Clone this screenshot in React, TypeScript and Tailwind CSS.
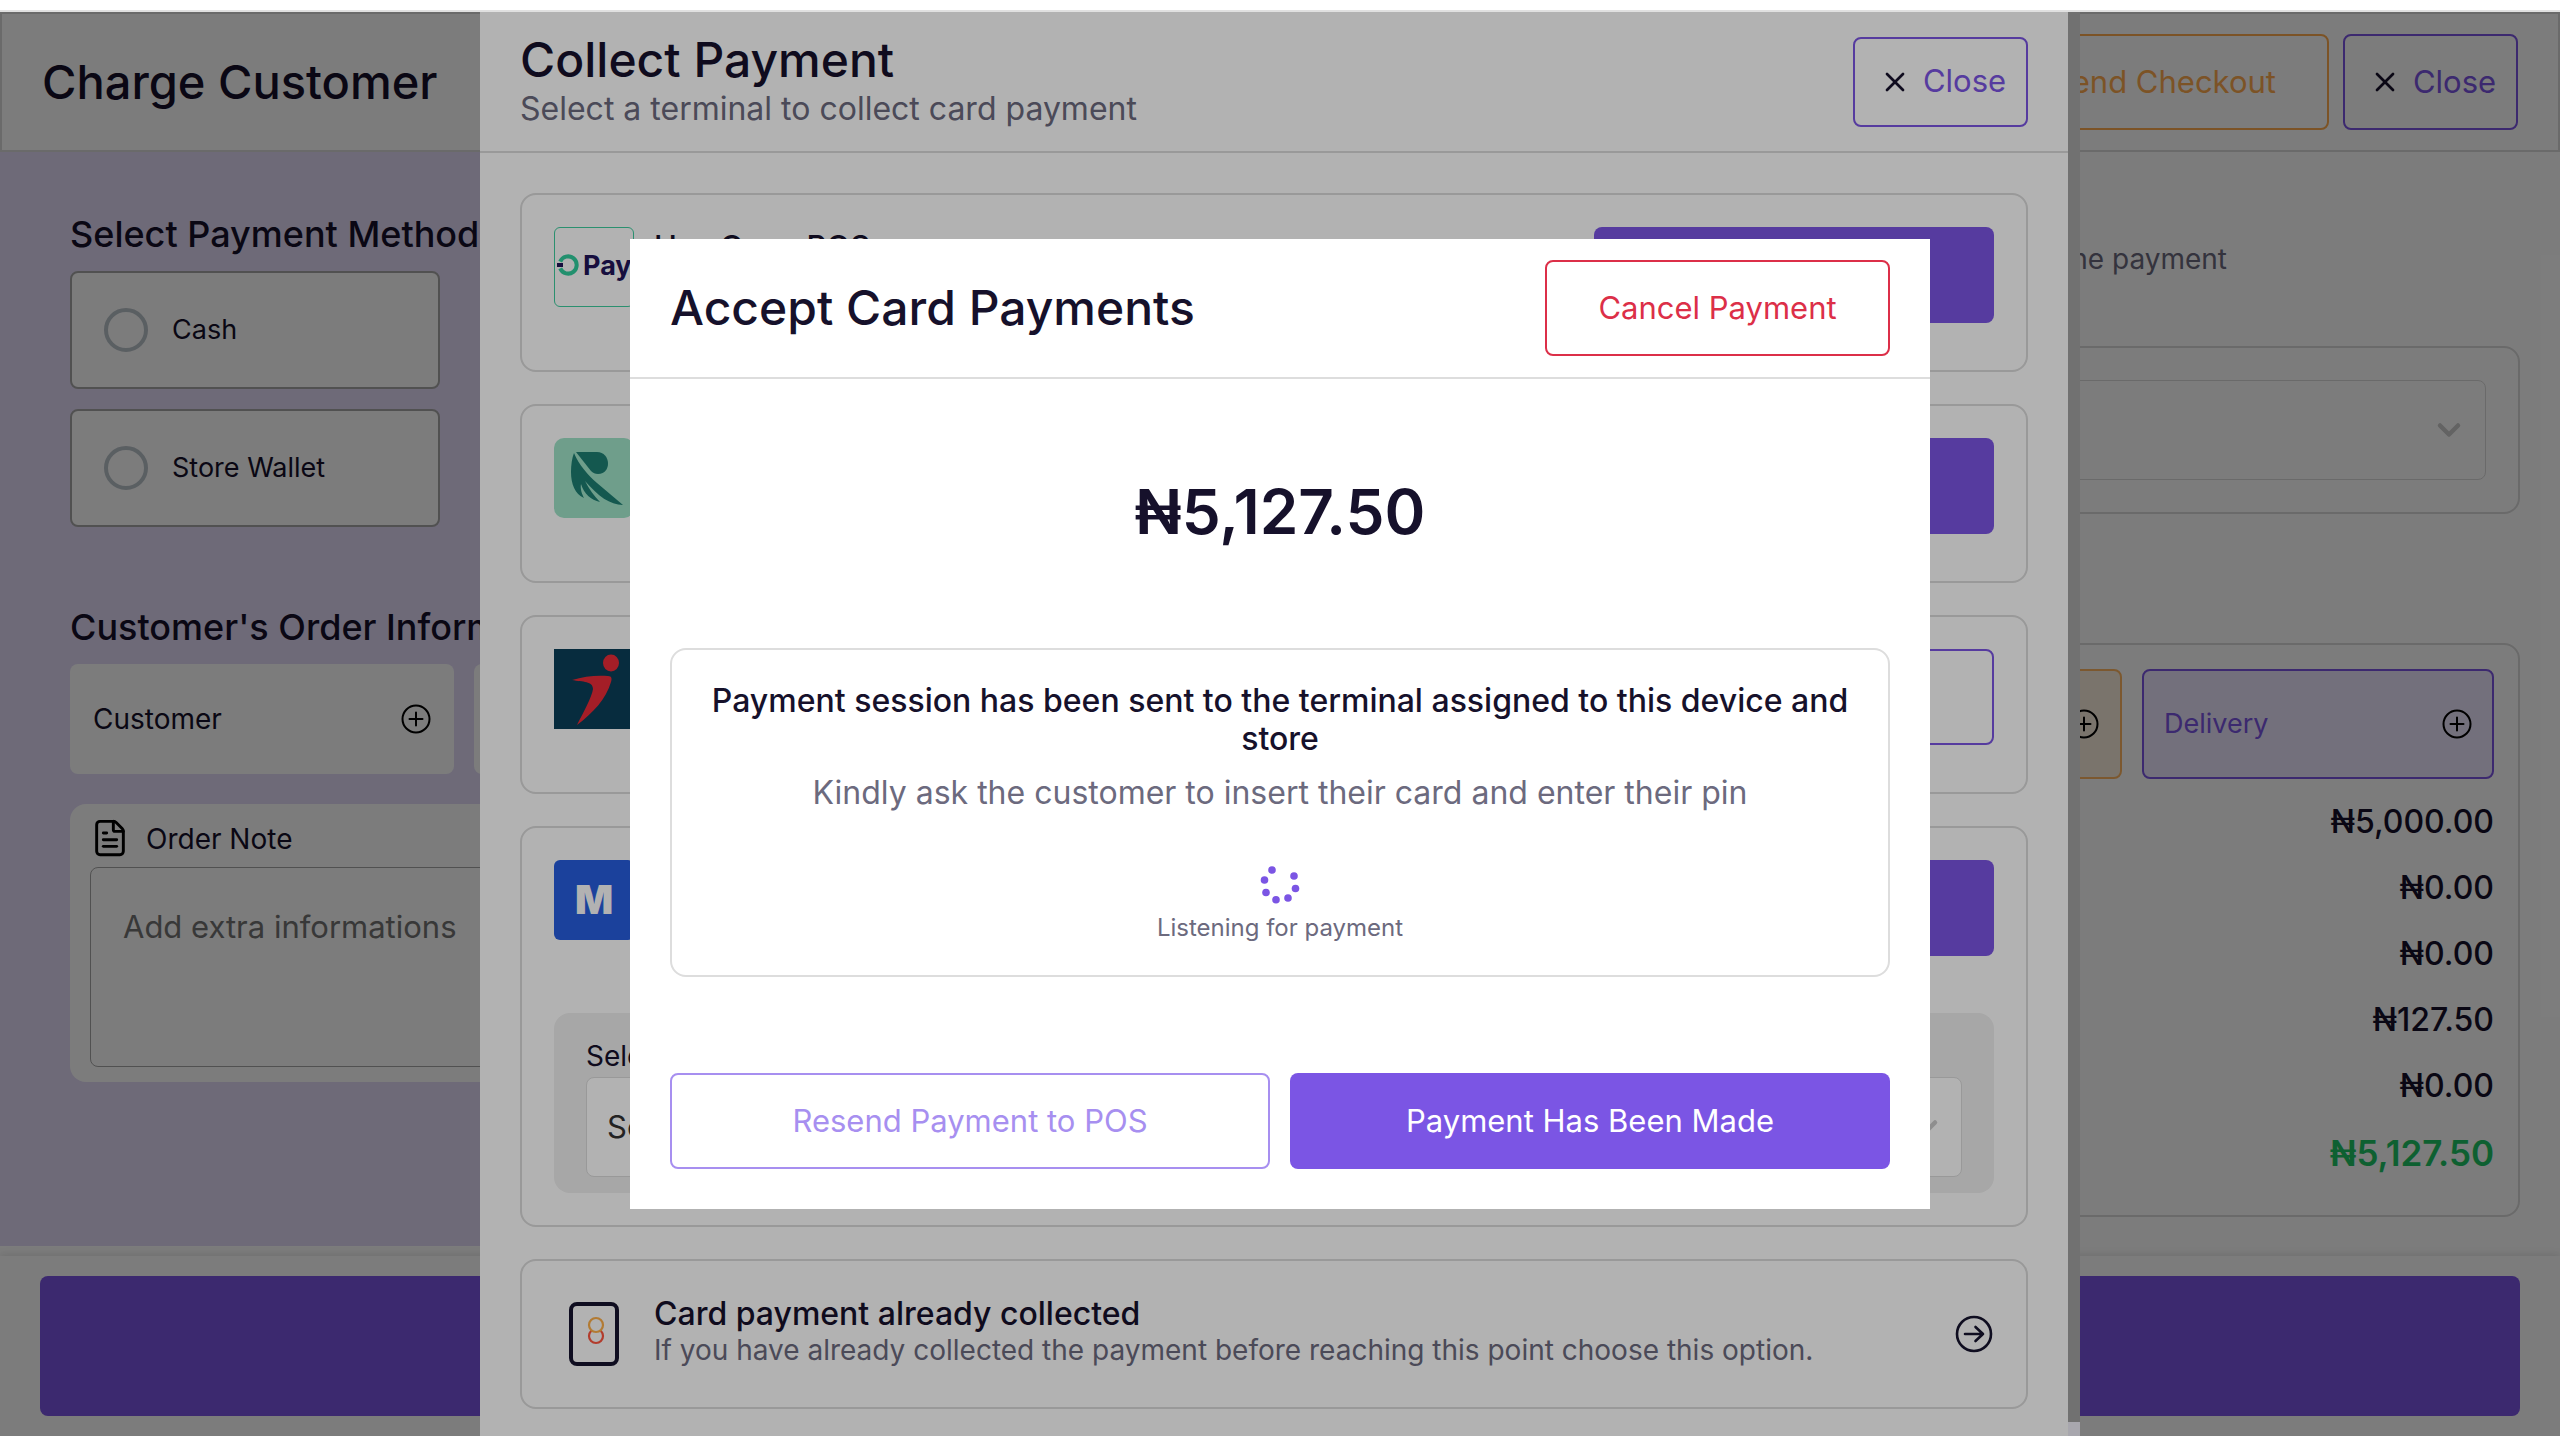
import type { ReactNode } from "react";
import { ChevronDown, FileText, X } from "lucide-react";

const totals = [
  { label: "Subtotal", value: "₦5,000.00" },
  { label: "Discount", value: "₦0.00" },
  { label: "Delivery Fee", value: "₦0.00" },
  { label: "Tax", value: "₦127.50" },
  { label: "Service Charge", value: "₦0.00" }
];

const PlusCircle = () => (
  <svg viewBox="0 0 30 30" className="size-[30px] shrink-0" fill="none" stroke="#000" strokeWidth="2" strokeLinecap="round">
    <circle cx="15" cy="15" r="13.5" />
    <path d="M15 8.5v13M8.5 15h13" />
  </svg>
);

const OpayLogo = () => (
  <div className="flex size-20 shrink-0 items-center gap-1 overflow-hidden rounded-[6px] border border-[#3ecea0] pb-1 pl-[2px]">
    <svg viewBox="0 0 22 22" className="size-[22px] shrink-0" fill="none">
      <path d="M3.2 7.6A8.6 8.6 0 1 1 3.2 14.4" stroke="#31ce9e" strokeWidth="4" />
      <path d="M0 9h6v4H0z" fill="#21155a" />
    </svg>
    <span className="text-[27px] leading-none font-bold text-[#21155a]">Pay</span>
  </div>
);

const RavenLogo = () => (
  <svg viewBox="0 0 80 80" className="size-20 shrink-0">
    <rect width="80" height="80" rx="10" fill="#9fe3c8" />
    <path d="M22 14h21c14 0 15 22 1 22-3 0-5-1-7-3Z" fill="#1d7e72" />
    <path
      d="M20 15C25 27 34 37 43 45L69 67C56 67 44 58 31 43C35 51 40 58 46 64C37 62 30 56 27 46C26 51 28 56 30 60C21 56 17 46 17 34C17 27 18 20 20 15Z"
      fill="#1d7e72"
    />
  </svg>
);

const RunnerLogo = () => (
  <svg viewBox="0 0 80 80" className="size-20 shrink-0">
    <rect width="80" height="80" fill="#0b3f59" />
    <ellipse cx="57" cy="14" rx="8" ry="8.5" fill="#eb2c38" />
    <path d="M18 31c12-4 26-5 36-4 4 0 4 3 3 6-5 17-18 31-34 43 6-12 15-28 16-36 0-8-10-7-21-9Z" fill="#eb2c38" />
  </svg>
);

const MoniepointLogo = () => (
  <div className="flex size-20 shrink-0 items-center justify-center rounded-[6px] bg-[#275ee0] text-[40px] leading-none font-black text-white">
    M
  </div>
);

const PosCard = ({ logo, title, outline, children }: { logo: ReactNode; title: string; outline?: boolean; children?: ReactNode }) => (
  <div className="flex min-h-[179px] flex-col gap-[57px] rounded-2xl border-2 border-[#dbdbdb] p-8">
    <div className="flex items-start justify-between">
      <div className="flex gap-5">
        {logo}
        <h3 className="text-[31px] leading-10 font-medium">{title}</h3>
      </div>
      <button
        aria-label={title}
        className={
          outline
            ? "h-24 w-[400px] rounded-lg border-2 border-[#7b55e4]"
            : "h-24 w-[400px] rounded-lg bg-[#7b55e4]"
        }
      />
    </div>
    {children}
  </div>
);

const ChargeCustomer = () => (
  <div className="flex h-full flex-col bg-white pt-3">
    <header className="flex h-[140px] shrink-0 items-center justify-between border-2 border-[#dbdbdb] px-10">
      <h1 className="text-[47px] font-medium">Charge Customer</h1>
      <div className="flex gap-[14px]">
        <button className="h-24 rounded-lg border-2 border-[#ffad50] px-[51px] text-[31px] text-[#ffad50]">Suspend Checkout</button>
        <button className="flex h-24 w-[175px] items-center justify-center gap-3 rounded-lg border-2 border-[#7b55e4] pl-1 text-[31px] text-[#7b55e4]">
          <X className="size-8 text-[#16112b]" strokeWidth={2} />
          Close
        </button>
      </div>
    </header>

    <div className="flex min-h-0 flex-1">
      <section className="mb-[10px] w-[52%] bg-[#e3dbf8] px-[70px] pt-[60px]">
        <h2 className="text-[36px] leading-[44px] font-medium">Select Payment Method</h2>
        <div className="mt-[15px] flex w-[370px] flex-col gap-5">
          {["Cash", "Store Wallet"].map((method) => (
            <label key={method} className="flex h-[118px] items-center gap-6 rounded-lg border-2 border-[#a8a8a8] bg-white px-8 text-[27px]">
              <input type="radio" name="method" className="size-11 appearance-none rounded-full border-4 border-[#bbc3cb]" />
              {method}
            </label>
          ))}
        </div>

        <h2 className="mt-[78px] text-[36px] leading-[44px] font-medium">Customer's Order Information</h2>
        <div className="mt-[15px] flex gap-5">
          <button className="flex h-[110px] w-[384px] items-center justify-between rounded-lg bg-white px-[23px] text-[28px]">
            Customer
            <PlusCircle />
          </button>
          <button aria-label="Sales Channel" className="h-[110px] w-[384px] rounded-lg bg-white" />
        </div>
        <div className="mt-[30px] flex h-[278px] flex-col rounded-2xl bg-white px-5 pt-[10px]">
          <label htmlFor="note" className="flex h-[53px] items-start gap-4 text-[28px] leading-[50px]">
            <FileText className="mt-1 size-10 text-black" strokeWidth={1.75} />
            Order Note
          </label>
          <textarea
            id="note"
            placeholder="Add extra informations"
            className="h-[200px] resize-none rounded-lg border border-[#a8a8a8] px-8 py-9 text-[31px] placeholder:text-[#757575]"
          />
        </div>
      </section>

      <section className="flex-1 px-10 pt-[89px]">
        <p className="pr-[293px] text-right text-[28px] leading-9 text-[#6c6a7e]">Select how you want to receive the payment</p>
        <div className="mt-[69px] rounded-2xl border-2 border-[#dbdbdb] p-8">
          <button aria-label="Payment account" className="flex h-[100px] w-full items-center justify-end rounded-lg border border-[#dbdbdb] px-[18px]">
            <ChevronDown className="size-9 text-[#cccccc]" strokeWidth={3} />
          </button>
        </div>
        <div className="mt-[129px] h-[574px] rounded-2xl border-2 border-[#dbdbdb] p-6">
          <div className="flex justify-end gap-5">
            <button aria-label="Discount" className="flex h-[110px] w-[352px] items-center justify-end rounded-lg border-2 border-[#ffb762] bg-[#fbefdf] px-[21px]">
              <PlusCircle />
            </button>
            <button className="flex h-[110px] w-[352px] items-center justify-between rounded-lg border-2 border-[#7b55e4] bg-[#ede7ff] px-5 text-[27px] text-[#7b55e4]">
              Delivery
              <PlusCircle />
            </button>
          </div>
          <dl className="mt-[10px]">
            {totals.map((row) => (
              <div key={row.label} className="flex h-[66px] items-center justify-between text-[32px] font-medium">
                <dt>{row.label}</dt>
                <dd>{row.value}</dd>
              </div>
            ))}
            <div className="flex h-[68px] items-center justify-between text-[35px] font-semibold text-[#1fc666]">
              <dt>Total</dt>
              <dd>{"₦5,127.50"}</dd>
            </div>
          </dl>
        </div>
      </section>
    </div>

    <footer className="z-10 h-[180px] shrink-0 bg-white px-10 py-5 shadow-[0_-1px_8px_rgba(0,0,0,0.12)]">
      <button aria-label="Complete Checkout" className="h-[140px] w-full rounded-lg bg-[#7b55e4]" />
    </footer>
  </div>
);

const CollectPayment = () => (
  <aside className="flex h-full w-[1600px] bg-white">
    <div className="min-w-0 flex-1 overflow-hidden">
      <header className="flex h-[141px] items-center justify-between border-b-2 border-[#dbdbdb] px-10">
        <div>
          <h2 className="text-[48px] leading-[54px] font-medium">Collect Payment</h2>
          <p className="text-[32px] leading-[44px] text-[#6c6a7e]">Select a terminal to collect card payment</p>
        </div>
        <button className="flex h-[90px] w-[175px] items-center justify-center gap-3 rounded-lg border-2 border-[#7b55e4] pl-1 text-[31px] text-[#7b55e4]">
          <X className="size-8 text-[#16112b]" strokeWidth={2} />
          Close
        </button>
      </header>
      <div className="flex flex-col gap-8 px-10 pt-10">
        <PosCard logo={<OpayLogo />} title="Use Opay POS" />
        <PosCard logo={<RavenLogo />} title="Use Raven POS" />
        <PosCard logo={<RunnerLogo />} title="Use Bank POS" outline />
        <PosCard logo={<MoniepointLogo />} title="Use Moniepoint POS">
          <div className="flex flex-col rounded-2xl bg-[#efefef] px-8 pt-[22px] pb-4">
            <label htmlFor="terminal" className="h-[42px] text-[28px]">Select Terminal</label>
            <div className="relative">
              <select id="terminal" className="h-[100px] w-full appearance-none rounded-lg border border-[#dbdbdb] bg-white px-5 text-[31px] text-[#333]">
                <option>Select Terminal</option>
              </select>
              <ChevronDown className="absolute top-8 right-[18px] size-9 text-[#cccccc]" strokeWidth={3} />
            </div>
          </div>
        </PosCard>
        <button className="flex h-[150px] items-center rounded-2xl border-2 border-[#dbdbdb] px-8 text-left">
          <span className="flex w-[100px] pl-[15px]">
            <svg viewBox="0 0 50 64" className="h-16 w-[50px]" fill="none">
              <rect x="2" y="2" width="46" height="60" rx="6" stroke="#16142e" strokeWidth="4" />
              <circle cx="27" cy="34" r="7" stroke="#ff5640" strokeWidth="2.2" />
              <circle cx="27" cy="23" r="7" fill="#fff" stroke="#ffb04a" strokeWidth="2.2" />
            </svg>
          </span>
          <span className="flex flex-1 flex-col pb-1">
            <span className="text-[32px] leading-9 font-medium">Card payment already collected</span>
            <span className="text-[28px] leading-9 text-[#6c6a7e]">
              If you have already collected the payment before reaching this point choose this option.
            </span>
          </span>
          <svg viewBox="0 0 40 40" className="size-10" fill="none" stroke="#16142e" strokeWidth="2.6" strokeLinecap="round" strokeLinejoin="round">
            <circle cx="20" cy="20" r="17" />
            <path d="M11 20h18M21.5 13l7.5 7-7.5 7" />
          </svg>
        </button>
      </div>
    </div>
    <div className="flex w-3 flex-col justify-end bg-[#a3a3a3]">
      <div className="h-[14px] bg-[#f1eff9]" />
    </div>
  </aside>
);

// Dots of the loading ring, one is missing at the top
const dots = [
  [12, 6],
  [34, 12],
  [4.5, 16],
  [35.5, 24.5],
  [6, 28.5],
  [28, 34],
  [16, 35.7]
];

const AcceptCardPayments = () => (
  <div role="dialog" aria-label="Accept Card Payments" className="w-[1300px] bg-white">
    <header className="flex h-[140px] items-center justify-between border-b-2 border-[#dddddd] px-10">
      <h2 className="text-[48px] font-medium">Accept Card Payments</h2>
      <button className="h-24 w-[345px] rounded-lg border-2 border-[#dc2f48] text-[31px] text-[#dc2f48]">Cancel Payment</button>
    </header>
    <div className="px-10 pb-10">
      <p className="pt-[93px] pb-24 text-center text-[62px] leading-[80px] font-semibold">{"₦5,127.50"}</p>
      <div className="flex h-[329px] flex-col items-center rounded-2xl border-2 border-[#dddddd] px-8 pt-8 text-center">
        <h3 className="text-[32px] leading-[38px] font-medium">
          Payment session has been sent to the terminal assigned to this device and store
        </h3>
        <p className="mt-4 text-[32px] leading-[38px] text-[#6c6a7e]">Kindly ask the customer to insert their card and enter their pin</p>
        <svg viewBox="0 0 40 40" className="mt-[52px] size-10 shrink-0" fill="#7b55e4">
          {dots.map(([cx, cy]) => (
            <circle key={cx} cx={cx} cy={cy} r="3.8" />
          ))}
        </svg>
        <p className="mt-2 text-[24px] leading-8 text-[#6c6a7e]">Listening for payment</p>
      </div>
      <div className="mt-24 grid grid-cols-2 gap-5">
        <button className="h-24 rounded-lg border-2 border-[#a78ff0] text-[31px] text-[#a78ff0]">Resend Payment to POS</button>
        <button className="h-24 rounded-lg bg-[#7b55e4] text-[31px] text-white">Payment Has Been Made</button>
      </div>
    </div>
  </div>
);

const App = () => {
  return (
    <div className="relative h-screen overflow-hidden font-['Inter',sans-serif] text-[#16112b]">
      <ChargeCustomer />
      <div className="absolute inset-x-0 top-3 bottom-0 z-20 flex justify-center bg-black/30">
        <CollectPayment />
      </div>
      <div className="absolute inset-x-0 top-3 bottom-0 z-30 flex items-center justify-center bg-black/30">
        <AcceptCardPayments />
      </div>
      <div className="absolute inset-x-0 top-0 z-40 h-3 border-b-2 border-[#e0e0e0] bg-white" />
    </div>
  );
};

export default App;
